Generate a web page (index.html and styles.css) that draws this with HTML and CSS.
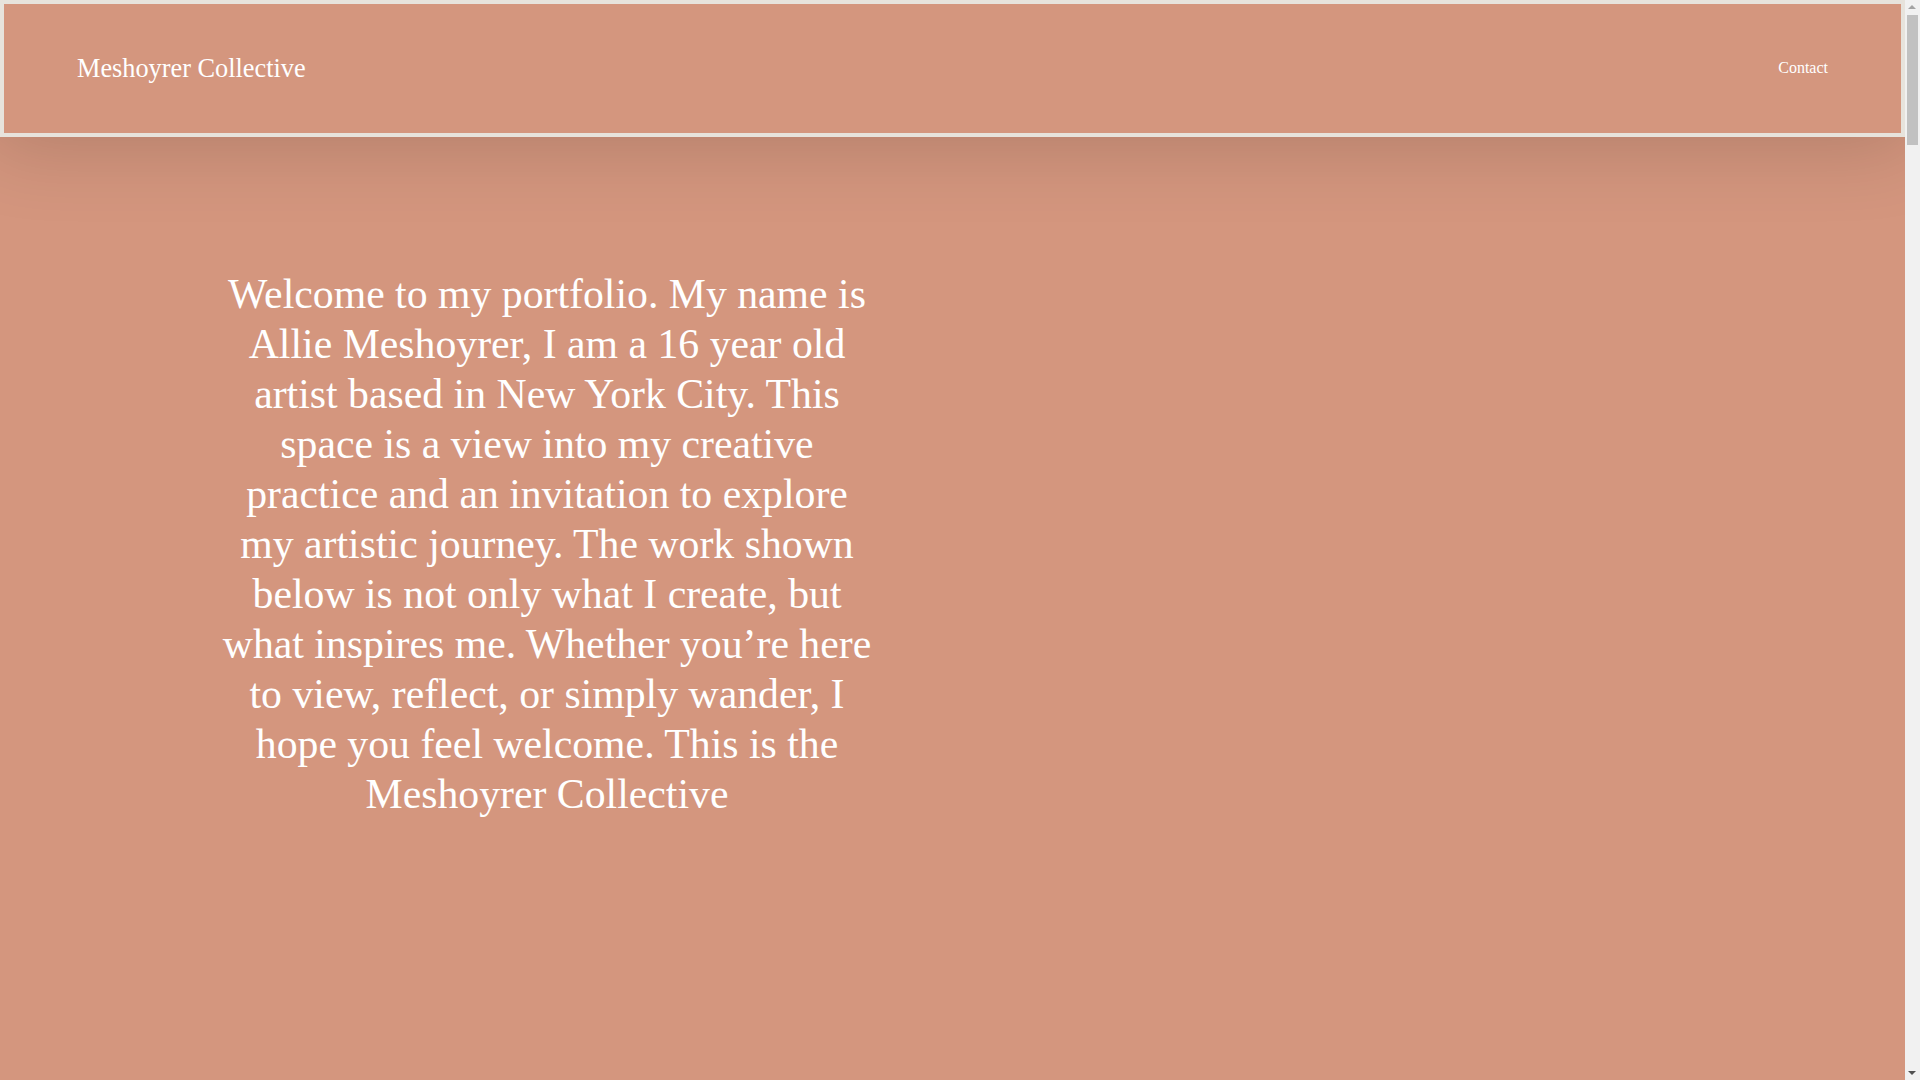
FILE: index.html
```html
<!DOCTYPE html>
<html lang="en">
<head>
<meta charset="utf-8">
<title>Meshoyrer Collective</title>
<link rel="stylesheet" href="styles.css">
</head>
<body>
<div class="page">
  <header class="site-header">
    <a class="brand" href="#">Meshoyrer Collective</a>
    <nav class="nav"><a class="nav-link" href="#">Contact</a></nav>
  </header>
  <main class="main">
    <section class="intro">
      <p class="intro-text">Welcome to my portfolio. My name is Allie Meshoyrer, I am a 16 year old artist based in New York City. This space is a view into my creative practice and an invitation to explore my artistic journey. The work shown below is not only what I create, but what inspires me. Whether you’re here to view, reflect, or simply wander, I hope you feel welcome. This is the Meshoyrer Collective</p>
    </section>
  </main>
</div>
<div class="scrollbar" aria-hidden="true">
  <span class="sb-arrow sb-up"></span>
  <span class="sb-thumb"></span>
  <span class="sb-arrow sb-down"></span>
</div>
</body>
</html>
```

FILE: styles.css
```css
html, body {
  margin: 0;
  padding: 0;
}

body {
  background: #d4967e;
  font-family: "Liberation Serif", "Times New Roman", serif;
  color: #ffffff;
  overflow: hidden;
}

.page {
  margin-right: 15px;
  min-height: 1080px;
  background: #d4967e;
}

.site-header {
  position: relative;
  z-index: 2;
  height: 129px;
  border: 4px solid #e7e3dc;
  background: #d4967e;
  display: flex;
  align-items: center;
  justify-content: space-between;
  padding: 0 73px;
  box-shadow: 0 0 80px 10px rgba(0, 0, 0, 0.16);
}

.brand {
  font-size: 26.3px;
  color: #ffffff;
  text-decoration: none;
  line-height: normal;
}

.nav-link {
  font-size: 16px;
  color: #ffffff;
  text-decoration: none;
  position: relative;
  top: -1px;
}

.main {
  display: flex;
  padding-top: 132px;
}

.intro {
  width: 660px;
  margin-left: 217px;
}

.intro-text {
  margin: 0;
  font-size: 41.75px;
  line-height: 50px;
  text-align: center;
}

/* imitation of the browser's vertical scrollbar */
.scrollbar {
  position: fixed;
  top: 0;
  right: 0;
  width: 15px;
  height: 100%;
  background: #f1f1f1;
  z-index: 10;
}

.sb-thumb {
  position: absolute;
  left: 2px;
  top: 15px;
  width: 11px;
  height: 130px;
  background: #c1c1c1;
}

.sb-arrow {
  position: absolute;
  left: 3px;
  width: 0;
  height: 0;
  border-left: 4.5px solid transparent;
  border-right: 4.5px solid transparent;
}

.sb-up {
  top: 5px;
  border-bottom: 4px solid #a3a3a3;
}

.sb-down {
  bottom: 5px;
  border-top: 4px solid #505050;
}
```
